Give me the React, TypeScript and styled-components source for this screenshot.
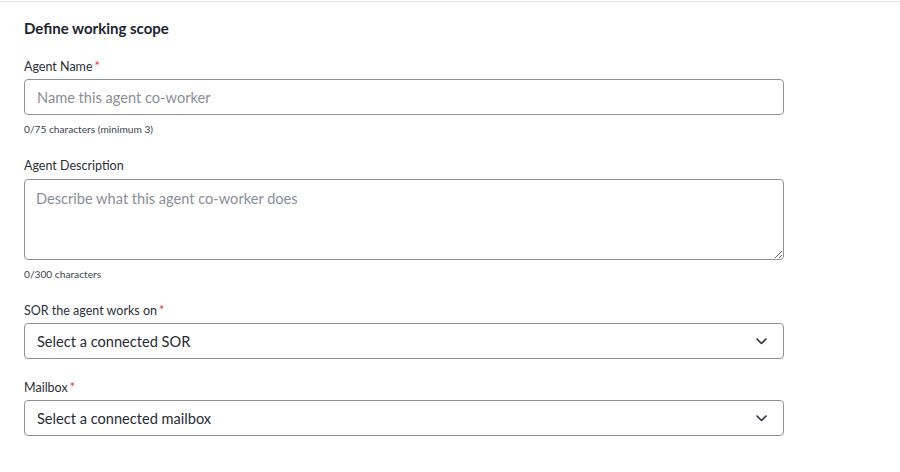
import React from "react";
import styled, { createGlobalStyle } from "styled-components";

const Global = createGlobalStyle`
  html, body { margin: 0; padding: 0; background: #ffffff; }
  body { font-family: "Lato", "Noto Sans", sans-serif; color: #1f2430; }
  * { box-sizing: border-box; }
`;

const Page = styled.div`
  margin-top: 1px;
  border-top: 1px solid #e3e4e7;
  padding: 16px 0 30px 24px;
  width: 900px;
`;

const Form = styled.div`
  width: 760px;
  display: flex;
  flex-direction: column;
  gap: 20px;
`;

const Heading = styled.h2`
  margin: 0;
  font-size: 15px;
  line-height: 20px;
  font-weight: 700;
  color: #1e2432;
`;

const Field = styled.div`
  display: flex;
  flex-direction: column;
`;

const Label = styled.label`
  font-size: 12.5px;
  line-height: 16px;
  color: #2a2f3a;
  padding-top: 1px;
  margin-bottom: 4px;
`;

const Required = styled.span`
  color: #e0362c;
  margin-left: 2px;
`;

const baseControl = `
  width: 100%;
  border: 1px solid #8f9297;
  border-radius: 4px;
  background: #fff;
  font-family: "Lato", "Noto Sans", sans-serif;
  font-size: 14.6px;
  color: #2a2f3a;
  outline: none;
`;

const TextInput = styled.input`
  ${baseControl}
  height: 36px;
  padding: 0 12px;
  &::placeholder { color: #8a8e96; }
`;

const TextArea = styled.textarea`
  ${baseControl}
  display: block;
  height: 81px;
  margin-top: 1px;
  padding: 10px 11px;
  line-height: 18px;
  resize: vertical;
  &::placeholder { color: #8a8e96; }
`;

const Helper = styled.div`
  margin-top: 6px;
  font-size: 10.2px;
  line-height: 16px;
  color: #3e4450;
`;

const SelectBox = styled.div`
  ${baseControl}
  height: 36px;
  padding: 0 16px 0 12px;
  display: flex;
  align-items: center;
  justify-content: space-between;
  cursor: pointer;
`;

const SelectText = styled.span`
  color: #262b36;
`;

const Chevron = () => (
  <svg width="11" height="7" viewBox="0 0 11 7" fill="none">
    <path d="M1 1l4.5 4.5L10 1" stroke="#2a2f3a" strokeWidth="1.6" strokeLinecap="round" strokeLinejoin="round" />
  </svg>
);

export default function App() {
  return (
    <>
      <Global />
      <Page>
        <Form>
          <Heading>Define working scope</Heading>
          <Field>
            <Label>
              Agent Name<Required>*</Required>
            </Label>
            <TextInput placeholder="Name this agent co-worker" />
            <Helper>0/75 characters (minimum 3)</Helper>
          </Field>
          <Field>
            <Label>Agent Description</Label>
            <TextArea placeholder="Describe what this agent co-worker does" />
            <Helper>0/300 characters</Helper>
          </Field>
          <Field>
            <Label>
              SOR the agent works on<Required>*</Required>
            </Label>
            <SelectBox>
              <SelectText>Select a connected SOR</SelectText>
              <Chevron />
            </SelectBox>
          </Field>
          <Field>
            <Label>
              Mailbox<Required>*</Required>
            </Label>
            <SelectBox>
              <SelectText>Select a connected mailbox</SelectText>
              <Chevron />
            </SelectBox>
          </Field>
        </Form>
      </Page>
    </>
  );
}
